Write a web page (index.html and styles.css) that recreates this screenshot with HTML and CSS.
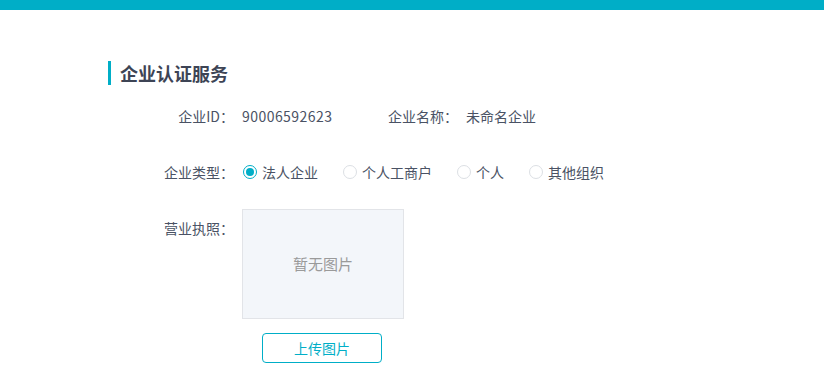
FILE: index.html
```html
<!DOCTYPE html>
<html lang="zh-CN">
<head>
  <meta charset="UTF-8">
  <title>企业认证服务</title>
  <link rel="stylesheet" href="styles.css">
</head>
<body>
  <div class="top-bar"></div>

  <div class="main">
    <h2 class="section-title">企业认证服务</h2>

    <div class="form-row">
      <div class="form-label">企业ID：</div>
      <div class="form-value id-value">90006592623</div>
      <div class="form-label inline">企业名称：</div>
      <div class="form-value">未命名企业</div>
    </div>

    <div class="form-row type-row">
      <div class="form-label">企业类型：</div>
      <div class="radio-group">
        <label class="radio checked"><span class="radio-dot"></span>法人企业</label>
        <label class="radio"><span class="radio-dot"></span>个人工商户</label>
        <label class="radio"><span class="radio-dot"></span>个人</label>
        <label class="radio"><span class="radio-dot"></span>其他组织</label>
      </div>
    </div>

    <div class="form-row license-row">
      <div class="form-label">营业执照：</div>
      <div class="upload">
        <div class="preview">暂无图片</div>
        <button class="upload-button">上传图片</button>
      </div>
    </div>
  </div>
</body>
</html>
```

FILE: styles.css
```css
body {
  margin: 0;
  font-family: "Noto Sans CJK SC", "Noto Sans", sans-serif;
  font-size: 14px;
  color: #4a5264;
  background: #fff;
}
.top-bar {
  height: 10px;
  background: #00aec7;
}
.main {
  padding: 51px 0 0 108px;
}
.section-title {
  margin: 0;
  height: 24px;
  line-height: 24px;
  border-left: 3px solid #00aec7;
  padding-left: 9px;
  font-size: 18px;
  font-weight: bold;
  color: #3d4455;
}
.form-row {
  display: flex;
  align-items: center;
  line-height: 20px;
  margin-top: 21px;
}
.type-row {
  margin-top: 36px;
}
.license-row {
  margin-top: 27px;
  align-items: flex-start;
}
.form-label {
  width: 126px;
  text-align: right;
  color: #4a5264;
}
.form-label.inline {
  width: auto;
}
.license-row .form-label {
  padding-top: 9px;
}
.form-value {
  margin-left: 8px;
}
.id-value {
  width: 146px;
  letter-spacing: 0.45px;
}
.radio-group {
  display: flex;
  margin-left: 9px;
  gap: 25px;
}
.radio {
  display: flex;
  align-items: center;
  gap: 5px;
  cursor: pointer;
}
.radio-dot {
  width: 12px;
  height: 12px;
  border: 1px solid #dcdfe4;
  border-radius: 50%;
  display: flex;
  align-items: center;
  justify-content: center;
}
.radio.checked .radio-dot {
  border-color: #00aec7;
}
.radio.checked .radio-dot::after {
  content: "";
  width: 8px;
  height: 8px;
  border-radius: 50%;
  background: #00aec7;
}
.upload {
  margin-left: 8px;
}
.preview {
  width: 160px;
  height: 108px;
  border: 1px solid #e2e4e8;
  background: #f3f6fa;
  display: flex;
  align-items: center;
  justify-content: center;
  font-size: 15px;
  color: #9a9a9a;
}
.upload-button {
  display: block;
  margin: 14px 0 0 20px;
  width: 120px;
  height: 30px;
  border: 1px solid #00aec7;
  border-radius: 4px;
  background: #fff;
  color: #00aec7;
  font-family: inherit;
  font-size: 14px;
  cursor: pointer;
}
```
